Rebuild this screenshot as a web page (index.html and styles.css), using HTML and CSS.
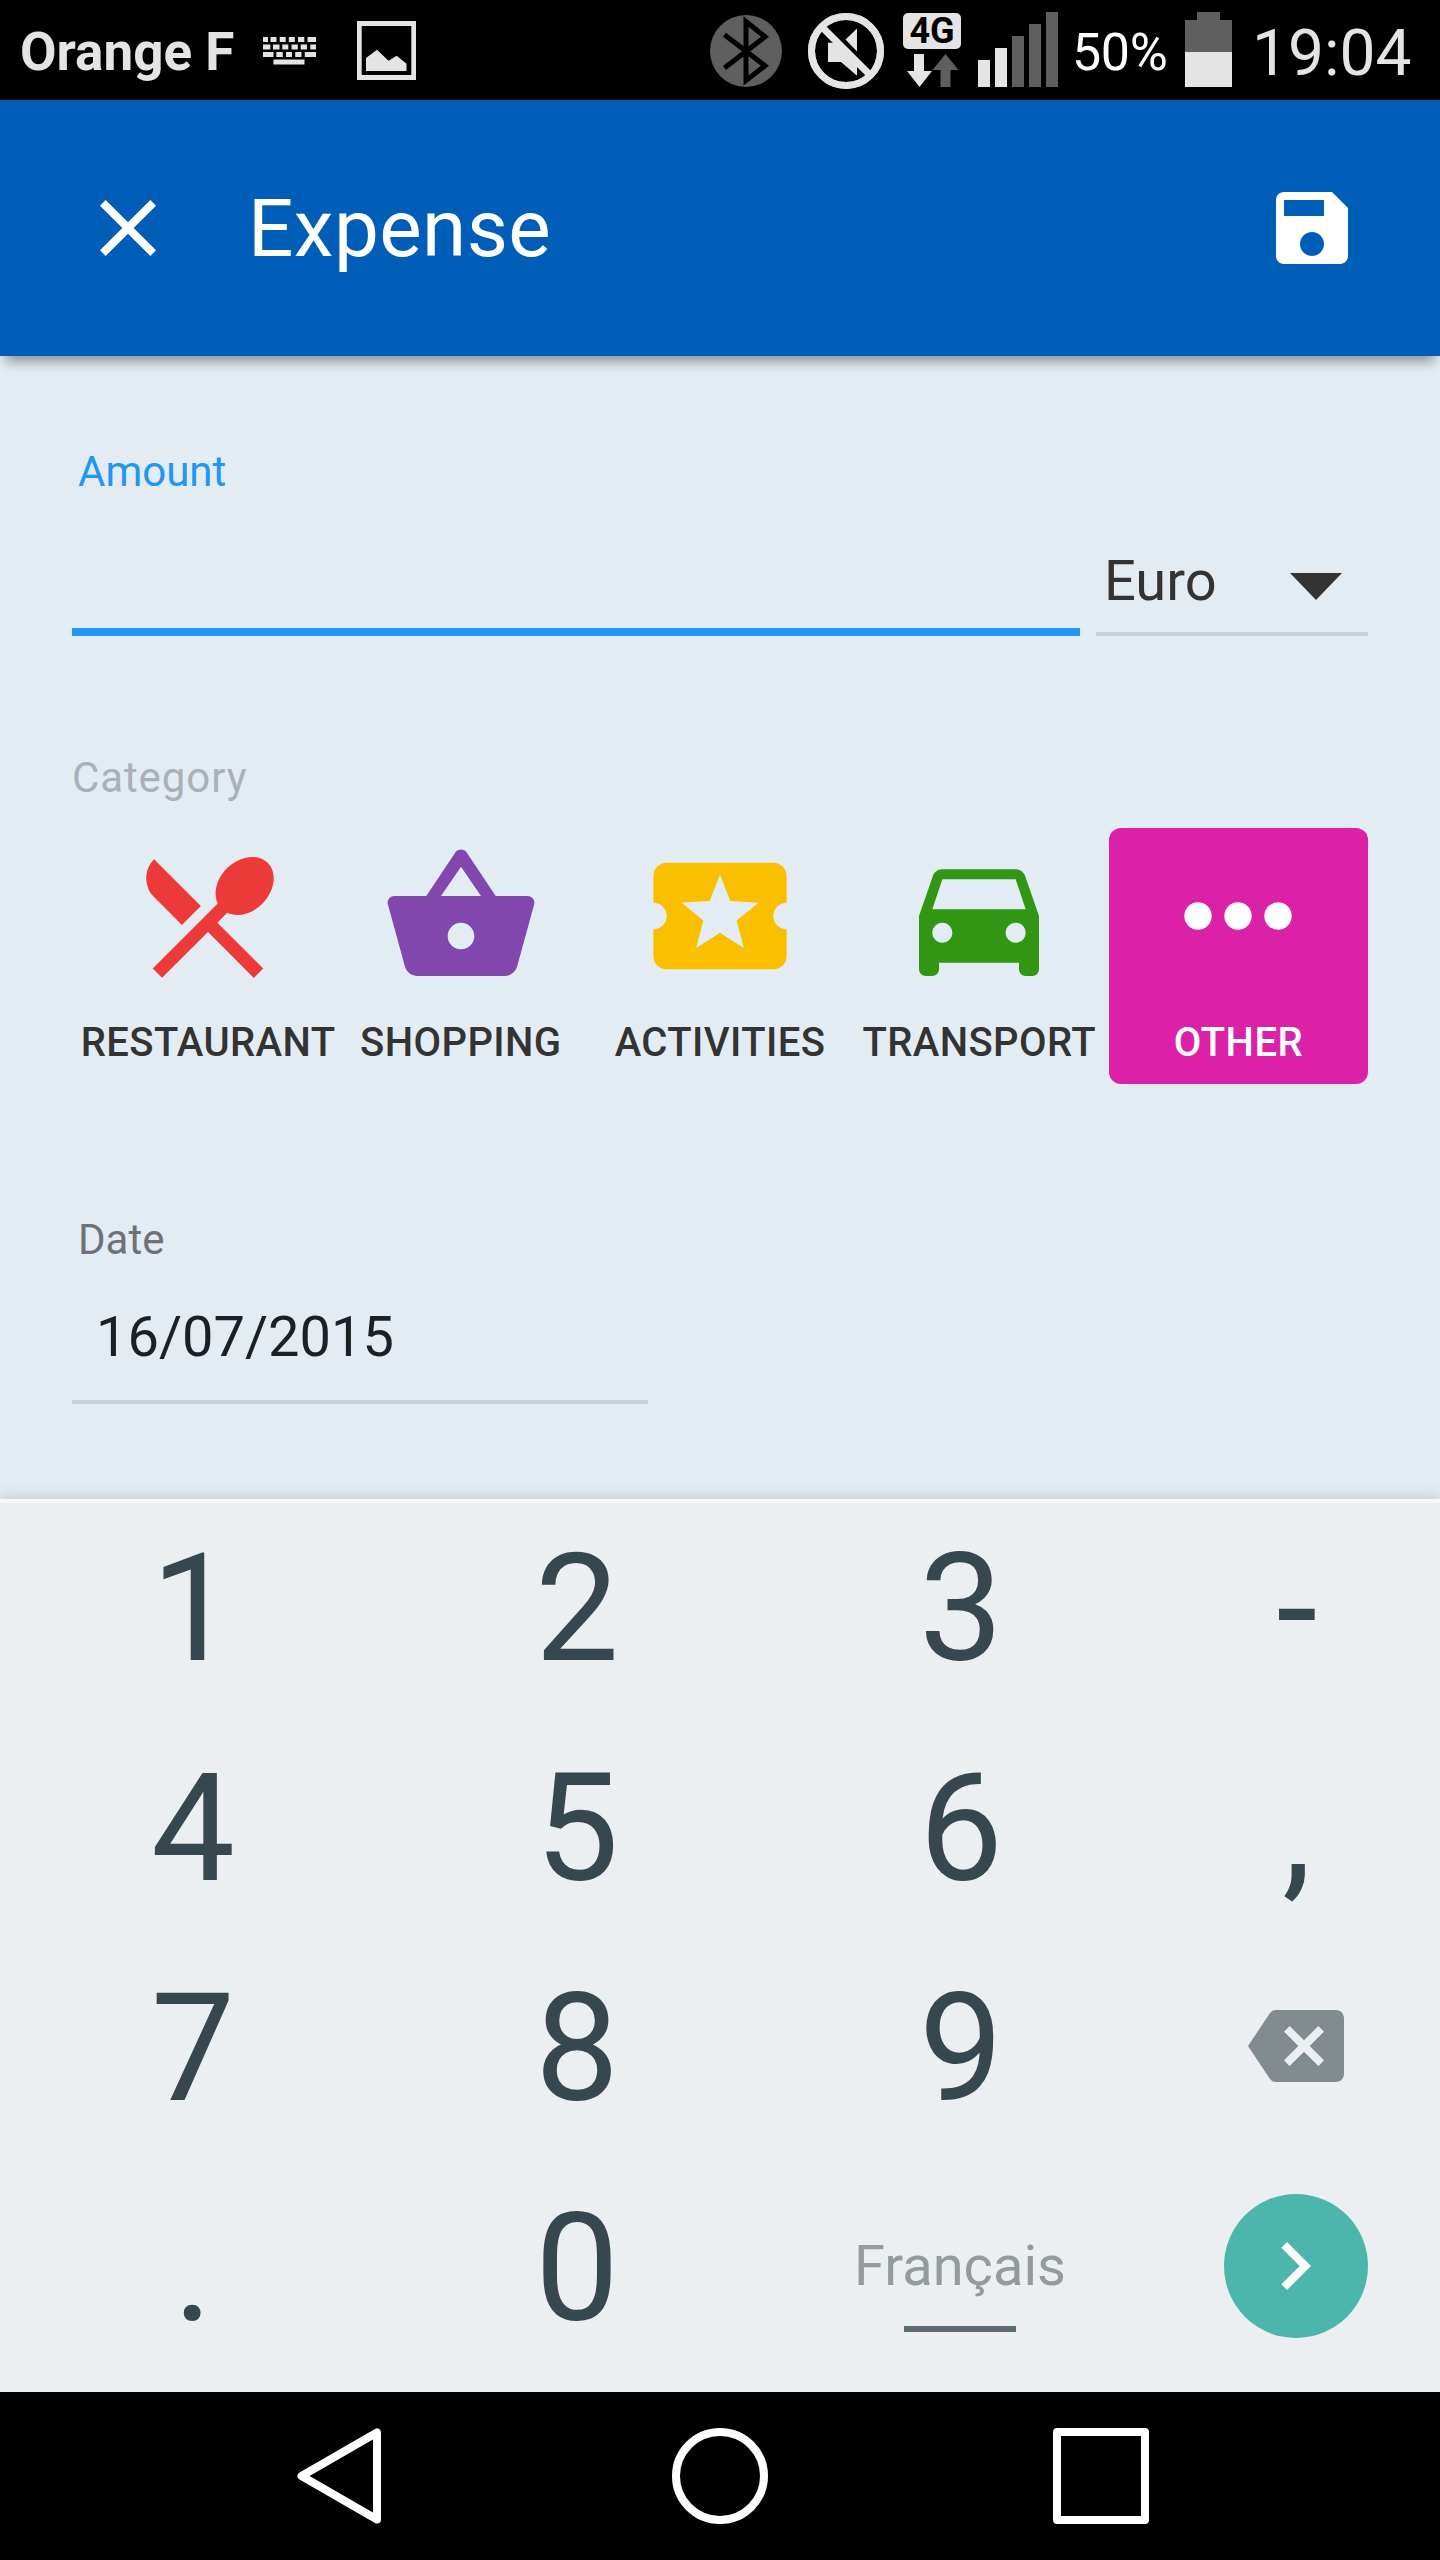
FILE: index.html
```html
<!DOCTYPE html>
<html lang="en">
<head>
<meta charset="utf-8">
<title>Expense</title>
<link rel="stylesheet" href="styles.css">
</head>
<body>
<div class="screen">
  <div class="status">
    <span class="carrier">Orange F</span>
    <svg class="ic-keyboard" width="53" height="28" viewBox="0 0 53 28">
      <path d="M0 0h5v5H0zM7.500 0h6v5h-6zM16.700 0h6v5h-6zM25.800 0h6v5h-6zM35 0h6.300v5H35zM44.500 0H53v5h-8.500zM0 7.500h7.300v5H0zM10 7.500h6.500v5H10zM19.300 7.500h6v5h-6zM28.500 7.500h6.300v5h-6.300zM37.700 7.500H44v5h-6.300zM47.300 7.500H53v5h-5.700zM0 15h10.500v5H0zM13.300 15h6.500v5h-6.500zM23 15h6v5h-6zM32.200 15h6.300v5h-6.300zM41.800 15H53v5H41.800zM10.500 22.500h31v5h-31z"/>
    </svg>
    <svg class="ic-image" width="59" height="59" viewBox="0 0 59 59">
      <path fill-rule="evenodd" d="M0 0h59v59H0zM4.700 5v49h49.600V5z"/>
      <path d="M9 50V37l11-8.300 11.500 11 8.200-5 9.800 8V50z"/>
    </svg>
    <svg class="ic-bluetooth" width="72" height="72" viewBox="0 0 72 72">
      <circle cx="36" cy="36" r="36" fill="#5f5f5f"/>
      <path d="M14.500 19.700 55 50.700 36 65.500V6.500l19 15.200L14.500 53" fill="none" stroke="#000" stroke-width="5"/>
    </svg>
    <svg class="ic-mute" width="76" height="76" viewBox="0 0 76 76">
      <circle cx="38" cy="38" r="34.500" fill="none" stroke="#e4e4e4" stroke-width="7"/>
      <path d="M20 29.700h7.400L49 50.500v12.200L33 49H20zM37.500 26.500 49 15.500v23z"/>
      <path d="M17.500 10.500 66 58.500" stroke="#000" stroke-width="4"/>
      <path d="M14 14 62 62" stroke="#e4e4e4" stroke-width="7"/>
      <circle cx="38" cy="38" r="34.500" fill="none" stroke="#e4e4e4" stroke-width="7"/>
    </svg>
    <div class="network">
      <span class="network-type">4G</span>
      <svg width="52" height="33" viewBox="0 0 52 33">
        <path d="M7 0h10v17h8L12.500 33 0 17h7z"/>
        <path d="M38.500 0 51.500 16H43.500v17h-10V16H25.500z" fill="#5f5f5f"/>
      </svg>
    </div>
    <svg class="ic-signal" width="80" height="75" viewBox="0 0 80 75">
      <path d="M0 48h12v27H0zM17 36h12v39H17z"/>
      <path d="M34 24h12v51H34zM51 12h12v63H51zM68 0h12v75H68z" fill="#5f5f5f"/>
    </svg>
    <span class="percent">50%</span>
    <svg class="ic-battery" width="47" height="75" viewBox="0 0 47 75">
      <path d="M12 0h23v8h12v32H0V8h12z" fill="#5f5f5f"/>
      <path d="M0 40h47v35H0z"/>
    </svg>
    <span class="clock">19:04</span>
  </div>

  <header class="appbar">
    <svg class="icon" viewBox="0 0 24 24"><path d="M19 6.410 17.590 5 12 10.590 6.410 5 5 6.410 10.590 12 5 17.590 6.410 19 12 13.410 17.590 19 19 17.590 13.410 12z"/></svg>
    <h1 class="title">Expense</h1>
    <svg class="icon" viewBox="0 0 24 24"><path d="M17 3H5c-1.110 0-2 .9-2 2v14c0 1.100.89 2 2 2h14c1.100 0 2-.9 2-2V7l-4-4zm-5 16c-1.660 0-3-1.340-3-3s1.340-3 3-3 3 1.340 3 3-1.340 3-3 3zm3-10H5V5h10v4z"/></svg>
  </header>

  <main class="form">
    <div class="label amount-label">Amount</div>
    <div class="amount-row">
      <div class="amount-input"></div>
      <div class="currency">
        <span>Euro</span>
        <svg width="52" height="27" viewBox="0 0 52 27"><path d="M0 0h52L26 27z"/></svg>
      </div>
    </div>

    <div class="label category-label">Category</div>
    <div class="categories">
      <div class="tile restaurant">
        <svg viewBox="0 0 24 24"><path d="M8.100 13.340l2.830-2.830L3.910 3.500c-1.560 1.560-1.560 4.090 0 5.660l4.190 4.180zm6.780-1.810c1.530.71 3.680.21 5.270-1.380 1.910-1.910 2.280-4.650.81-6.120-1.460-1.460-4.200-1.100-6.120.81-1.590 1.590-2.090 3.740-1.380 5.270L3.700 19.870l1.410 1.410L12 14.410l6.880 6.880 1.410-1.410L13.410 13l1.470-1.470z"/></svg>
        <span>RESTAURANT</span>
      </div>
      <div class="tile shopping">
        <svg viewBox="0 0 24 24"><path d="M17.210 9l-4.380-6.560c-.19-.28-.51-.42-.83-.42-.32 0-.64.14-.83.43L6.790 9H2c-.55 0-1 .45-1 1 0 .09.01.18.04.27l2.540 9.270c.23.84 1 1.460 1.920 1.460h13c.92 0 1.690-.62 1.930-1.460l2.540-9.270L23 10c0-.55-.45-1-1-1h-4.790zM9 9l3-4.400L15 9H9zm3 8c-1.100 0-2-.9-2-2s.9-2 2-2 2 .9 2 2-.9 2-2 2z"/></svg>
        <span>SHOPPING</span>
      </div>
      <div class="tile activities">
        <svg viewBox="0 0 24 24"><path d="M20 12c0-1.100.9-2 2-2V6c0-1.100-.9-2-2-2H4c-1.100 0-1.990.9-1.990 2v4c1.100 0 1.990.9 1.990 2s-.89 2-2 2v4c0 1.100.9 2 2 2h16c1.100 0 2-.9 2-2v-4c-1.100 0-2-.9-2-2zm-4.420 4.800L12 14.500l-3.580 2.300 1.080-4.120-3.290-2.690 4.240-.25L12 5.800l1.540 3.950 4.240.25-3.290 2.690 1.090 4.110z"/></svg>
        <span>ACTIVITIES</span>
      </div>
      <div class="tile transport">
        <svg viewBox="0 0 24 24"><path d="M18.920 6.010C18.720 5.420 18.160 5 17.500 5h-11c-.66 0-1.210.42-1.420 1.010L3 12v8c0 .55.45 1 1 1h1c.55 0 1-.45 1-1v-1h12v1c0 .55.45 1 1 1h1c.55 0 1-.45 1-1v-8l-2.080-5.990zM6.500 16c-.83 0-1.500-.67-1.500-1.500S5.670 13 6.500 13s1.500.67 1.500 1.500S7.330 16 6.500 16zm11 0c-.83 0-1.500-.67-1.500-1.500s.67-1.500 1.500-1.500 1.500.67 1.500 1.500-.67 1.500-1.500 1.500zM5 11l1.500-4.500h11L19 11H5z"/></svg>
        <span>TRANSPORT</span>
      </div>
      <div class="tile other">
        <svg viewBox="0 0 24 24"><circle cx="6" cy="12" r="2.050"/><circle cx="12" cy="12" r="2.050"/><circle cx="18" cy="12" r="2.050"/></svg>
        <span>OTHER</span>
      </div>
    </div>

    <div class="label date-label">Date</div>
    <div class="date-input">16/07/2015</div>
  </main>

  <div class="keypad">
    <div class="key">1</div><div class="key">2</div><div class="key">3</div><div class="key">-</div>
    <div class="key">4</div><div class="key">5</div><div class="key">6</div><div class="key">,</div>
    <div class="key">7</div><div class="key">8</div><div class="key">9</div>
    <div class="key icon-key">
      <svg class="backspace" viewBox="0 0 24 24"><path d="M22 3H7c-.69 0-1.230.35-1.590.88L0 12l5.410 8.110c.36.53.9.89 1.590.89h15c1.100 0 2-.9 2-2V5c0-1.100-.9-2-2-2zm-3 12.590L17.590 17 14 13.410 10.410 17 9 15.590 12.590 12 9 8.410 10.410 7 14 10.590 17.590 7 19 8.410 15.410 12 19 15.590z"/></svg>
    </div>
    <div class="key">.</div><div class="key">0</div>
    <div class="key icon-key language"><span>Français</span></div>
    <div class="key icon-key">
      <div class="go"><svg class="icon" viewBox="0 0 24 24"><path d="M10 6L8.590 7.410 13.170 12l-4.580 4.590L10 18l6-6z"/></svg></div>
    </div>
  </div>

  <nav class="navbar">
    <svg viewBox="0 0 96 96"><path d="M10.500 48 86 4.500v87z"/></svg>
    <svg viewBox="0 0 96 96"><circle cx="48" cy="48" r="44"/></svg>
    <svg viewBox="0 0 96 96"><path d="M4 4h88v88H4z"/></svg>
  </nav>
</div>
</body>
</html>
```
FILE: styles.css
```css
* { box-sizing: border-box; }

body {
  margin: 0;
  font-family: Roboto, "Liberation Sans", sans-serif;
  background: #000;
}

svg { display: block; flex: none; }

.screen {
  width: 1440px;
  height: 2560px;
  display: flex;
  flex-direction: column;
  overflow: hidden;
}

/* status bar */
.status {
  height: 100px;
  flex: none;
  background: #000;
  color: #e4e4e4;
  fill: #e4e4e4;
  display: flex;
  align-items: flex-start;
  padding-left: 20px;
  white-space: nowrap;
}
.carrier {
  width: 243px;
  font-size: 53px;
  font-weight: 700;
  line-height: 104px;
}
.ic-keyboard { margin-top: 37px; }
.ic-image { margin: 21px 0 0 41px; }
.ic-bluetooth { margin: 15px 0 0 294px; }
.ic-mute { margin: 13px 0 0 26px; }
.network {
  width: 58px;
  margin: 13px 0 0 19px;
  display: flex;
  flex-direction: column;
  gap: 5px;
}
.network svg { margin-left: 4px; }
.network-type {
  height: 36px;
  border-radius: 5px;
  background: #e4e4e4;
  color: #000;
  font-size: 36px;
  font-weight: 700;
  line-height: 37px;
  text-align: center;
}
.ic-signal { margin: 12px 0 0 17px; }
.percent {
  width: 113px;
  margin-left: 14px;
  color: #fff;
  font-size: 52px;
  letter-spacing: -.4px;
  line-height: 105px;
}
.ic-battery { margin-top: 12px; }
.clock {
  margin-left: 20px;
  font-size: 64px;
  line-height: 107px;
}

/* app bar */
.appbar {
  height: 256px;
  flex: none;
  position: relative;
  display: flex;
  align-items: center;
  padding: 0 80px;
  background: #005eb8;
  box-shadow: 0 11px 11px -5px rgba(0, 0, 0, .36);
  color: #fff;
  fill: #fff;
}
.icon { width: 96px; height: 96px; }
.title {
  margin: 0 auto 0 72px;
  font-size: 80px;
  font-weight: 400;
  letter-spacing: .4px;
  line-height: 96px;
  padding-top: 2px;
}

/* form */
.form {
  height: 1143px;
  flex: none;
  background: #e4ecf3;
  padding: 91px 72px 0;
}
.label { font-size: 42px; line-height: 50px; }
.amount-label {
  padding-left: 6px;
  color: #2196f3;
}
.amount-row {
  display: flex;
  gap: 16px;
  margin-top: 31px;
}
.amount-input {
  width: 1008px;
  height: 108px;
  border-bottom: 8px solid #2196f3;
}
.currency {
  flex: 1;
  height: 108px;
  border-bottom: 4px solid #c9d1d8;
  display: flex;
  justify-content: space-between;
  padding: 0 26px 0 8px;
  color: #333;
  fill: #333;
  font-size: 56px;
  line-height: 106px;
}
.currency svg { margin-top: 45px; }
.category-label {
  margin-top: 117px;
  color: #a9b1b8;
  letter-spacing: .9px;
}
.categories {
  display: grid;
  grid-template-columns: repeat(5, minmax(0, 1fr));
  margin-top: 25px;
}
.tile {
  height: 256px;
  border-radius: 12px;
  display: flex;
  flex-direction: column;
  align-items: center;
  padding-top: 8px;
  color: #333;
  font-size: 40px;
  font-weight: 500;
  letter-spacing: .4px;
}
.tile svg { width: 160px; height: 160px; }
.tile span { margin-top: 23px; line-height: 48px; }
.restaurant { fill: #eb3a38; padding-left: 13px; }
.shopping { fill: #8246af; }
.activities { fill: #fac000; }
.transport { fill: #319614; }
.other { fill: #fff; color: #fff; background: #db21a8; }
.date-label {
  margin-top: 131px;
  padding-left: 6px;
  color: #6c7277;
}
.date-input {
  width: 576px;
  height: 139px;
  padding-left: 24px;
  border-bottom: 4px solid #c9d1d8;
  color: #1b2023;
  font-size: 56px;
  line-height: 144px;
}

/* keypad */
.keypad {
  height: 893px;
  flex: none;
  position: relative;
  display: grid;
  grid-template-columns: 384px 384px 384px 288px;
  grid-template-rows: repeat(4, 220px);
  background: #ebeff1;
  box-shadow: inset 0 4px #f6f9fa, 0 -2px 14px rgba(0, 0, 0, .14);
  color: #37474f;
  font-size: 149.5px;
}
.key {
  display: flex;
  justify-content: center;
  align-items: center;
  padding-left: 2px;
  line-height: 220px;
}
.icon-key { padding: 0 0 6px; }
.backspace {
  width: 96px;
  height: 96px;
  fill: #828c90;
}
.language { font-size: 56px; color: #939b9f; }
.language span {
  display: flex;
  flex-direction: column;
  align-items: center;
  line-height: 66px;
  margin-top: 33px;
}
.language span::after {
  content: "";
  width: 112px;
  height: 6px;
  margin-top: 27px;
  background: #5d6b72;
}
.go {
  width: 144px;
  height: 144px;
  padding-left: 23px;
  border-radius: 50%;
  background: #4db6ac;
  fill: #fff;
  display: flex;
  align-items: center;
}

/* navigation bar */
.navbar {
  height: 168px;
  flex: none;
  position: relative;
  display: flex;
  justify-content: center;
  align-items: center;
  gap: 285px;
  background: #000;
}
.navbar svg {
  width: 96px;
  height: 96px;
  fill: none;
  stroke: #fff;
  stroke-width: 8px;
  stroke-linejoin: round;
}
```
